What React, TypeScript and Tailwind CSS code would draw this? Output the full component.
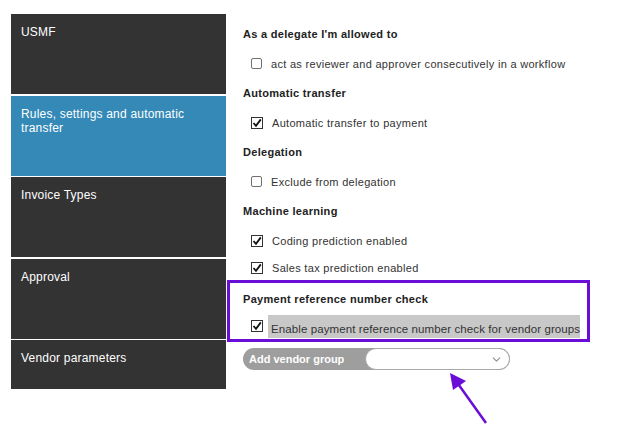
import { ChevronDown } from "lucide-react"

const font = { fontFamily: '"Liberation Sans", Arial, sans-serif' }

function Box({ checked }: { checked?: boolean }) {
  if (checked) {
    return (
      <svg width="12" height="12" viewBox="0 0 12 12" className="shrink-0">
        <rect x="0.5" y="0.5" width="11" height="11" fill="white" stroke="#333" />
        <path d="M2.5 6 L5 8.8 L9.8 2.4" fill="none" stroke="#111" strokeWidth="1.8" />
      </svg>
    )
  }
  return <span className="block w-[11px] h-[11px] shrink-0 rounded-[2px] border border-[#707070] bg-white" />
}

function Row({ label, checked, h = "h-[29px]" }: { label: string; checked?: boolean; h?: string }) {
  return (
    <div className={`flex items-center pl-[8px] ${h}`}>
      <Box checked={checked} />
      <span className="ml-[9px] mt-[2px] text-[11px] tracking-[0.3px] text-[#333]">{label}</span>
    </div>
  )
}

function Heading({ children }: { children: string }) {
  return <div className="h-[30px] flex items-center text-[11px] font-bold tracking-[0.3px] text-[#222]">{children}</div>
}

const tiles = [
  { label: "USMF", cls: "h-[80px] bg-[#333333]" },
  { label: "Rules, settings and automatic transfer", cls: "h-[80px] mt-[2px] bg-[#3489b6]" },
  { label: "Invoice Types", cls: "h-[80px] mt-px bg-[#333333]" },
  { label: "Approval", cls: "h-[80px] mt-[2px] bg-[#333333]" },
  { label: "Vendor parameters", cls: "h-[49px] mt-px bg-[#333333]" },
]

export default function App() {
  return (
    <div className="relative w-[617px] h-[427px] bg-white flex overflow-hidden" style={font}>
      <div className="ml-[11px] mt-[14px] w-[215px] flex flex-col">
        {tiles.map((t) => (
          <div key={t.label} className={`${t.cls} pl-[10px] pr-[30px] pt-[11px] text-[12px] leading-[14px] tracking-[0.2px] text-white`}>
            {t.label}
          </div>
        ))}
      </div>

      <div className="ml-[17px] mt-[19px] flex flex-col">
        <Heading>As a delegate I'm allowed to</Heading>
        <Row label="act as reviewer and approver consecutively in a workflow" />
        <Heading>Automatic transfer</Heading>
        <Row label="Automatic transfer to payment" checked />
        <Heading>Delegation</Heading>
        <Row label="Exclude from delegation" />
        <Heading>Machine learning</Heading>
        <Row label="Coding prediction enabled" checked />
        <Row label="Sales tax prediction enabled" checked h="h-[25px]" />

        <div className="-ml-[16px] w-[363px] border-[3px] border-[#6a0dd6] pl-[13px] pt-[1px]">
          <Heading>Payment reference number check</Heading>
          <div className="flex items-start pl-[8px] h-[25px]">
            <span className="mt-[6px]">
              <Box checked />
            </span>
            <span className="ml-[5px] mt-px h-[23px] w-[312px] bg-[#c8c8c8] pl-[3px] pt-[7px] text-[11.5px] leading-[14px] tracking-[0.1px] text-[#333] whitespace-nowrap">
              Enable payment reference number check for vendor groups
            </span>
          </div>
        </div>

        <div className="mt-[6px] flex h-[22px] w-[267px] rounded-full bg-[#9e9e9e]">
          <span className="w-[122px] pl-[6px] flex items-center text-[11px] font-bold text-white">Add vendor group</span>
          <div className="flex-1 flex items-center justify-end pr-[6px] rounded-full border border-[#a8a8a8] bg-white">
            <ChevronDown className="w-[13px] h-[13px] text-[#999]" strokeWidth={2.5} />
          </div>
        </div>
      </div>

      <svg className="absolute left-0 top-0" width="617" height="427" viewBox="0 0 617 427">
        <line x1="486" y1="423" x2="456" y2="381" stroke="#6a0dd6" strokeWidth="2.5" />
        <polygon points="450,373 453,390 466,381" fill="#6a0dd6" />
      </svg>
    </div>
  )
}
